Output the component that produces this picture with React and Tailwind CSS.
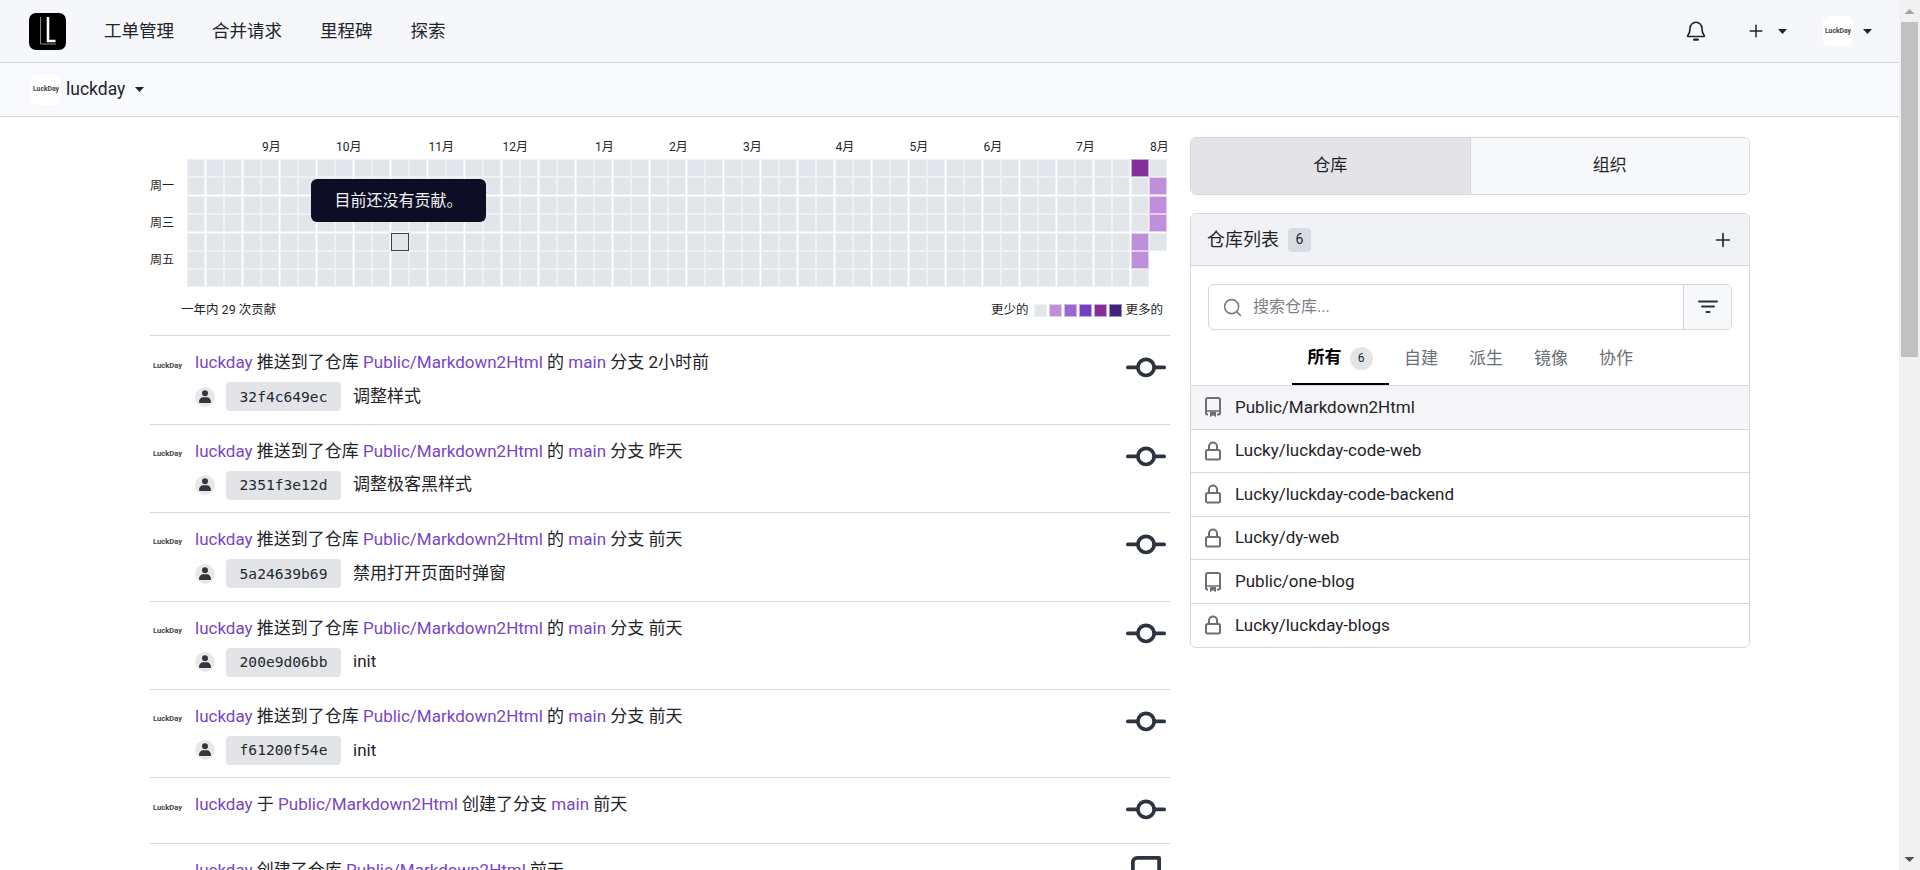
import React from "react";
import { Plus, Search } from "lucide-react";

const months = [
  { label: "9月", cls: "col-start-[5]" },
  { label: "10月", cls: "col-start-[9]" },
  { label: "11月", cls: "col-start-[14]" },
  { label: "12月", cls: "col-start-[18]" },
  { label: "1月", cls: "col-start-[23]" },
  { label: "2月", cls: "col-start-[27]" },
  { label: "3月", cls: "col-start-[31]" },
  { label: "4月", cls: "col-start-[36]" },
  { label: "5月", cls: "col-start-[40]" },
  { label: "6月", cls: "col-start-[44]" },
  { label: "7月", cls: "col-start-[49]" },
  { label: "8月", cls: "col-start-[53]" },
];

const levels = [
  "bg-[#e2e5ea] outline-[#f0f1f4]",
  "bg-[#c08fdc] outline-[#e3cff0]",
  "bg-[#9a67d0] outline-[#d0b8ea]",
  "bg-[#7540c0] outline-[#c0a8e4]",
  "bg-[#842d9b] outline-[#c9a4d6]",
  "bg-[#42237a] outline-[#a08cc0]",
];

// 贡献数据：key 为 列-行
const activity = { "51-0": 4, "52-1": 1, "52-2": 1, "52-3": 1, "51-4": 1, "51-5": 1 };

const cells = [];
for (let c = 0; c < 53; c++) {
  for (let r = 0; r < 7; r++) {
    if (c === 52 && r > 4) continue;
    cells.push({ key: `${c}-${r}`, level: activity[`${c}-${r}`] || 0, hover: c === 11 && r === 4 });
  }
}

const feed = [
  { sha: "32f4c649ec", msg: "调整样式", time: "2小时前" },
  { sha: "2351f3e12d", msg: "调整极客黑样式", time: "昨天" },
  { sha: "5a24639b69", msg: "禁用打开页面时弹窗", time: "前天" },
  { sha: "200e9d06bb", msg: "init", time: "前天" },
  { sha: "f61200f54e", msg: "init", time: "前天" },
];

const repos = [
  { name: "Public/Markdown2Html", lock: false, active: true },
  { name: "Lucky/luckday-code-web", lock: true },
  { name: "Lucky/luckday-code-backend", lock: true },
  { name: "Lucky/dy-web", lock: true },
  { name: "Public/one-blog", lock: false },
  { name: "Lucky/luckday-blogs", lock: true },
];

function Caret({ className }) {
  return (
    <svg width="9" height="5" viewBox="0 0 9 5" className={className}>
      <path d="M0 0h9L4.5 5z" fill="#1f2328" />
    </svg>
  );
}

function Logo() {
  return (
    <svg width="37" height="37" viewBox="0 0 37 37">
      <rect width="37" height="37" rx="7" fill="#000" />
      <path d="M11.5 4v27h15.5" stroke="#8a8a8a" strokeWidth="1" fill="none" />
      <path d="M19 4v24h7.5" stroke="#fff" strokeWidth="2.6" fill="none" />
    </svg>
  );
}

function LuckAvatar({ size }) {
  return (
    <div className={`flex items-center justify-center rounded-md bg-white font-bold text-[#444] whitespace-nowrap ${size}`}>
      LuckDay
    </div>
  );
}

function CommitIcon() {
  return (
    <svg width="40" height="40" viewBox="0 0 16 16" fill="#2d3440">
      <path d="M11.93 8.5a4.002 4.002 0 0 1-7.86 0H.75a.75.75 0 0 1 0-1.5h3.32a4.002 4.002 0 0 1 7.86 0h3.32a.75.75 0 0 1 0 1.5Zm-1.43-.75a2.5 2.5 0 1 0-5 0 2.5 2.5 0 0 0 5 0Z" />
    </svg>
  );
}

function UserDot() {
  return (
    <div className="flex h-5 w-5 items-center justify-center rounded-full bg-[#e8e8ea]">
      <svg width="12" height="14" viewBox="0 0 12 14" fill="#33373d">
        <circle cx="6" cy="3.2" r="3" />
        <path d="M.8 13c-.4 0-.8-.3-.8-.8C0 9.400 2 7.300 4 7.300h4c2 0 4 2.100 4 4.900 0 .5-.4.8-.8.8z" />
      </svg>
    </div>
  );
}

function RepoIcon() {
  return (
    <svg width="20" height="20" viewBox="0 0 20 20" fill="none" stroke="#6b6f76" strokeWidth="2">
      <path d="M5 17.500H4.500a1.500 1.500 0 0 1-1.500-1.500V3a2 2 0 0 1 2-2h10a2 2 0 0 1 2 2v13a1.500 1.500 0 0 1-1.500 1.500H14" />
      <path d="M3 14h14" strokeWidth="1.600" />
      <path d="M7 15h6v5l-3-1.800L7 20z" fill="#6b6f76" stroke="none" />
    </svg>
  );
}

function LockIcon() {
  return (
    <svg width="20" height="20" viewBox="0 0 20 20" fill="none" stroke="#6b6f76" strokeWidth="2">
      <rect x="3" y="9" width="14" height="9.500" rx="1.500" />
      <path d="M6 9V5.500a4 4 0 0 1 8 0V9" />
    </svg>
  );
}

function Link({ children }) {
  return <span className="text-[#7a45c4]">{children}</span>;
}

function Feed() {
  return (
    <div>
      {feed.map((item) => (
        <div key={item.sha} className="flex h-[88.4px] border-t border-[#d5d8de] pt-[14px]">
          <LuckAvatar size="mt-[3px] h-[24px] w-[45px] justify-start pl-[3px] text-[7.6px] bg-transparent" />
          <div className="flex-1">
            <div className="h-6 leading-6">
              <Link>luckday</Link> 推送到了仓库 <Link>Public/Markdown2Html</Link> 的 <Link>main</Link> 分支 {item.time}
            </div>
            <div className="mt-2 flex h-[29px] items-center">
              <UserDot />
              <div className="ml-[11px] flex h-[29px] w-[115px] items-center justify-center rounded bg-[#e2e4e8] font-['DejaVu_Sans_Mono',monospace] text-[14.6px] text-[#24292f]">
                {item.sha}
              </div>
              <div className="ml-3">{item.msg}</div>
            </div>
          </div>
          <div className="mt-[-2px] mr-[4px]">
            <CommitIcon />
          </div>
        </div>
      ))}
      <div className="flex h-[66px] border-t border-[#d5d8de] pt-[14px]">
        <LuckAvatar size="mt-[3px] h-[24px] w-[45px] justify-start pl-[3px] text-[7.6px] bg-transparent" />
        <div className="h-6 flex-1 leading-6">
          <Link>luckday</Link> 于 <Link>Public/Markdown2Html</Link> 创建了分支 <Link>main</Link> 前天
        </div>
        <div className="mt-[-2px] mr-[4px]">
          <CommitIcon />
        </div>
      </div>
      <div className="flex border-t border-[#d5d8de] pt-[14px]">
        <LuckAvatar size="mt-[3px] h-[24px] w-[45px] justify-start pl-[3px] text-[7.6px] bg-transparent" />
        <div className="h-6 flex-1 leading-6">
          <Link>luckday</Link> 创建了仓库 <Link>Public/Markdown2Html</Link> 前天
        </div>
        <svg width="40" height="40" viewBox="0 0 16 16" fill="#2d3440" className="mt-[-2px] mr-[4px]">
          <path d="M2 2.500A2.500 2.500 0 0 1 4.500 0h8.750a.75.75 0 0 1 .75.75v12.500a.75.75 0 0 1-.75.75h-2.500a.75.75 0 0 1 0-1.500h1.750v-2h-8a1 1 0 0 0-.714 1.700.75.75 0 1 1-1.072 1.050A2.495 2.495 0 0 1 2 11.500Zm10.500-1h-8a1 1 0 0 0-1 1v6.708A2.486 2.486 0 0 1 4.500 9h8Z" />
        </svg>
      </div>
    </div>
  );
}

function Heatmap() {
  return (
    <div className="relative">
      <div className="ml-[38px] grid h-[20px] grid-cols-[repeat(53,16px)] gap-x-[2.5px] text-[12px] leading-[14px]">
        {months.map((m) => (
          <div key={m.label} className={`row-start-1 whitespace-nowrap ${m.cls}`}>
            {m.label}
          </div>
        ))}
      </div>
      <div className="flex">
        <div className="grid w-[38px] grid-rows-[repeat(7,16px)] gap-y-[2.4px] text-[12px] leading-4">
          <div className="row-start-2">周一</div>
          <div className="row-start-4">周三</div>
          <div className="row-start-6">周五</div>
        </div>
        <div className="grid grid-flow-col grid-cols-[repeat(53,16px)] grid-rows-[repeat(7,16px)] gap-x-[2.5px] gap-y-[2.4px]">
          {cells.map((c) => (
            <div
              key={c.key}
              className={
                c.hover
                  ? "bg-[#e2e5ea] outline-[1.5px] outline-[#3f3f46]"
                  : `outline-1 ${levels[c.level]}`
              }
            />
          ))}
        </div>
      </div>
      <div className="absolute left-[161px] top-[39px] flex h-[43px] w-[175px] items-center justify-center rounded-md bg-[#0d0d26] text-[16px] text-[#f3f3f6]">
        目前还没有贡献。
      </div>
      <div className="flex h-[49px] items-center pl-[31px] pr-[7px] text-[12.5px]">
        <div>一年内 29 次贡献</div>
        <div className="ml-auto flex items-center">
          <span className="mr-[6px]">更少的</span>
          <div className="flex gap-[2px]">
            {levels.map((l, i) => (
              <div key={i} className={`h-[13px] w-[13px] outline-1 -outline-offset-1 ${l}`} />
            ))}
          </div>
          <span className="ml-[3px]">更多的</span>
        </div>
      </div>
    </div>
  );
}

function RepoPanel() {
  return (
    <div className="overflow-hidden rounded-md border border-[#d3d8e0] bg-white">
      <div className="flex h-[52px] items-center border-b border-[#d3d8e0] bg-[#f1f2f5] px-4">
        <span className="text-[18px]">仓库列表</span>
        <span className="ml-[9px] flex h-6 w-[23px] items-center justify-center rounded bg-[#d8dce2] text-[14px]">6</span>
        <Plus size={22} strokeWidth={1.8} className="ml-auto mr-[-1px] text-[#24292f]" />
      </div>
      <div className="px-[17px] pt-[18px]">
        <div className="flex h-[46px] overflow-hidden rounded-md border border-[#d3d8e0]">
          <div className="flex flex-1 items-center pl-[13px] text-[16px] text-[#7b7f87]">
            <Search size={21} strokeWidth={1.8} className="text-[#7d7f85]" />
            <span className="ml-[10px]">搜索仓库...</span>
          </div>
          <div className="flex w-[48px] items-center justify-center border-l border-[#d3d8e0] bg-[#f7f8fa]">
            <svg width="20" height="14" viewBox="0 0 20 14" fill="#2d3033">
              <rect width="20" height="2" y="0.500" rx="1" />
              <rect width="14" height="2" x="3" y="5.500" rx="1" />
              <rect width="5" height="2" x="7.500" y="11" rx="1" />
            </svg>
          </div>
        </div>
      </div>
      <div className="flex h-[55px] justify-center text-[#6b6e78]">
        <div className="flex items-center border-b-2 border-black px-4 pt-[3px] font-bold text-black">
          所有
          <span className="ml-2 flex h-[23px] w-[23px] items-center justify-center rounded-full bg-[#e2e4e8] text-[12px] font-normal text-[#24292f]">6</span>
        </div>
        <div className="flex items-center px-[15.500px] pt-[3px]">自建</div>
        <div className="flex items-center px-[15.500px] pt-[3px]">派生</div>
        <div className="flex items-center px-[15.500px] pt-[3px]">镜像</div>
        <div className="flex items-center px-[15.500px] pt-[3px]">协作</div>
      </div>
      {repos.map((r) => (
        <div
          key={r.name}
          className={`flex h-[43.600px] items-center gap-3 border-t border-[#d3d8e0] pl-3 ${r.active ? "bg-[#f6f6f8]" : ""}`}
        >
          {r.lock ? <LockIcon /> : <RepoIcon />}
          <span>{r.name}</span>
        </div>
      ))}
    </div>
  );
}

export default function App() {
  return (
    <div className="flex h-[870px] overflow-hidden bg-white font-['Roboto','Noto_Sans_CJK_SC',sans-serif] text-[17px] text-[#1f2328]">
      <div className="min-w-0 flex-1">
        <header className="flex h-[63px] items-center border-b border-[#cfd8e3] bg-[#f6f7fb] pl-[29px] pr-[27px]">
          <Logo />
          <nav className="ml-[38px] flex gap-[38px] text-[17.500px]">
            <span>工单管理</span>
            <span>合并请求</span>
            <span>里程碑</span>
            <span>探索</span>
          </nav>
          <svg width="22" height="24" viewBox="0 0 24 24" fill="none" stroke="#1f2328" strokeWidth="1.800" className="ml-auto" strokeLinejoin="round">
            <path d="M12 2.500a6.500 6.500 0 0 0-6.500 6.500c0 4-.8 6.200-2.600 8.200-.3.3-.1.8.3.8h17.600c.4 0 .6-.5.3-.8-1.800-2-2.600-4.200-2.600-8.200A6.500 6.500 0 0 0 12 2.500z" />
            <path d="M10 21.500h4" strokeWidth="2.400" strokeLinecap="round" />
          </svg>
          <Plus size={20} strokeWidth={1.8} className="ml-[39px] text-[#1f2328]" />
          <Caret className="ml-[12px]" />
          <LuckAvatar size="ml-[36px] h-[30px] w-[30px] text-[6.800px]" />
          <Caret className="ml-[10px]" />
        </header>
        <div className="flex h-[54px] items-center border-b border-[#cfd8e3] bg-[#f8f9fc] pl-[31px]">
          <LuckAvatar size="h-[30px] w-[30px] text-[6.800px]" />
          <span className="ml-[5px] text-[17.500px]">luckday</span>
          <Caret className="ml-[10px]" />
        </div>
        <main className="flex gap-[20px] pl-[150px] pt-[23px]">
          <div className="w-[1020px]">
            <Heatmap />
            <Feed />
          </div>
          <div className="w-[560px]">
            <div className="-mt-[3px] flex h-[58px] overflow-hidden rounded-md border border-[#d3d8e0]">
              <div className="flex flex-1 items-center justify-center border-r border-[#d3d8e0] bg-[#e3e3e8]">仓库</div>
              <div className="flex flex-1 items-center justify-center bg-[#f7f8fa]">组织</div>
            </div>
            <div className="mt-[18px]">
              <RepoPanel />
            </div>
          </div>
        </main>
      </div>
      <div className="flex w-[21px] flex-col items-center bg-[#f1f1f1]">
        <svg width="17" height="22" viewBox="0 0 17 22" className="shrink-0">
          <path d="M8.500 9l5 5h-10z" fill="#a3a3a3" />
        </svg>
        <div className="h-[335px] w-[17px] bg-[#c1c1c1]" />
        <div className="flex-1" />
        <svg width="17" height="22" viewBox="0 0 17 22" className="shrink-0">
          <path d="M8.500 14l5-5h-10z" fill="#505050" />
        </svg>
      </div>
    </div>
  );
}
